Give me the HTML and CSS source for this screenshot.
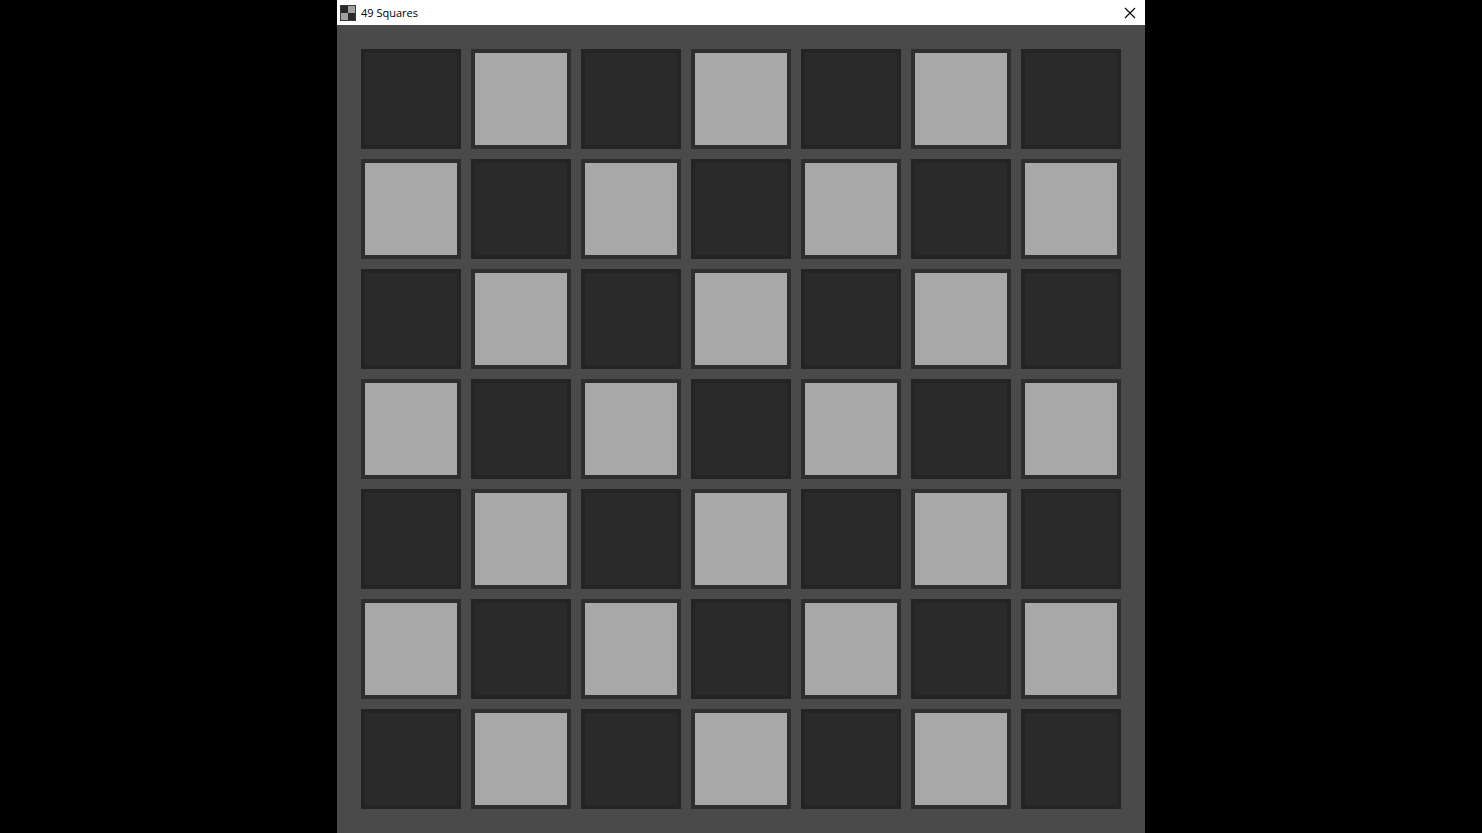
FILE: index.html
```html
<!DOCTYPE html>
<html>
<head>
<meta charset="utf-8">
<title>49 Squares</title>
<link rel="stylesheet" href="styles.css">
</head>
<body>
<div class="window">
  <div class="titlebar">
    <svg class="app-icon" width="16" height="16" viewBox="0 0 16 16">
      <rect x="0" y="0" width="16" height="16" fill="#3a3a3a"/>
      <rect x="1" y="1" width="7" height="7" fill="#2a2a2a"/>
      <rect x="8" y="1" width="7" height="7" fill="#a0a0a0"/>
      <rect x="1" y="8" width="7" height="7" fill="#a0a0a0"/>
      <rect x="8" y="8" width="7" height="7" fill="#2a2a2a"/>
    </svg>
    <span class="title">49 Squares</span>
    <svg class="close" width="12" height="12" viewBox="0 0 12 12">
      <path d="M1 1 L11 11 M11 1 L1 11" stroke="#000" stroke-width="1.1" fill="none"/>
    </svg>
  </div>
  <div class="board">
    <div class="sq dark"></div><div class="sq light"></div><div class="sq dark"></div><div class="sq light"></div><div class="sq dark"></div><div class="sq light"></div><div class="sq dark"></div>
    <div class="sq light"></div><div class="sq dark"></div><div class="sq light"></div><div class="sq dark"></div><div class="sq light"></div><div class="sq dark"></div><div class="sq light"></div>
    <div class="sq dark"></div><div class="sq light"></div><div class="sq dark"></div><div class="sq light"></div><div class="sq dark"></div><div class="sq light"></div><div class="sq dark"></div>
    <div class="sq light"></div><div class="sq dark"></div><div class="sq light"></div><div class="sq dark"></div><div class="sq light"></div><div class="sq dark"></div><div class="sq light"></div>
    <div class="sq dark"></div><div class="sq light"></div><div class="sq dark"></div><div class="sq light"></div><div class="sq dark"></div><div class="sq light"></div><div class="sq dark"></div>
    <div class="sq light"></div><div class="sq dark"></div><div class="sq light"></div><div class="sq dark"></div><div class="sq light"></div><div class="sq dark"></div><div class="sq light"></div>
    <div class="sq dark"></div><div class="sq light"></div><div class="sq dark"></div><div class="sq light"></div><div class="sq dark"></div><div class="sq light"></div><div class="sq dark"></div>
  </div>
</div>
</body>
</html>
```

FILE: styles.css
```css
html, body {
  margin: 0;
  padding: 0;
  background: #000;
  height: 100%;
  overflow: hidden;
}
body {
  display: flex;
  justify-content: center;
}
.window {
  width: 808px;
  height: 833px;
  display: flex;
  flex-direction: column;
  background: #4a4a4a;
}
.titlebar {
  height: 25px;
  background: #fff;
  display: flex;
  align-items: center;
  padding-left: 3px;
  padding-right: 9px;
  box-sizing: border-box;
}
.app-icon {
  flex: none;
}
.title {
  margin-left: 5px;
  font-family: "Open Sans", "Noto Sans", sans-serif;
  font-size: 11px;
  color: #000;
  flex: 1;
}
.close {
  flex: none;
}
.board {
  padding: 24px;
  display: grid;
  grid-template-columns: repeat(7, 100px);
  grid-auto-rows: 100px;
  gap: 10px;
}
.sq {
  box-sizing: border-box;
  border: 4px solid #2e2e2e;
}
.sq.dark {
  background: #2a2a2a;
  border-color: #242424;
}
.sq.light {
  background: #a8a8a8;
  border-color: #2e2e2e;
}
```
